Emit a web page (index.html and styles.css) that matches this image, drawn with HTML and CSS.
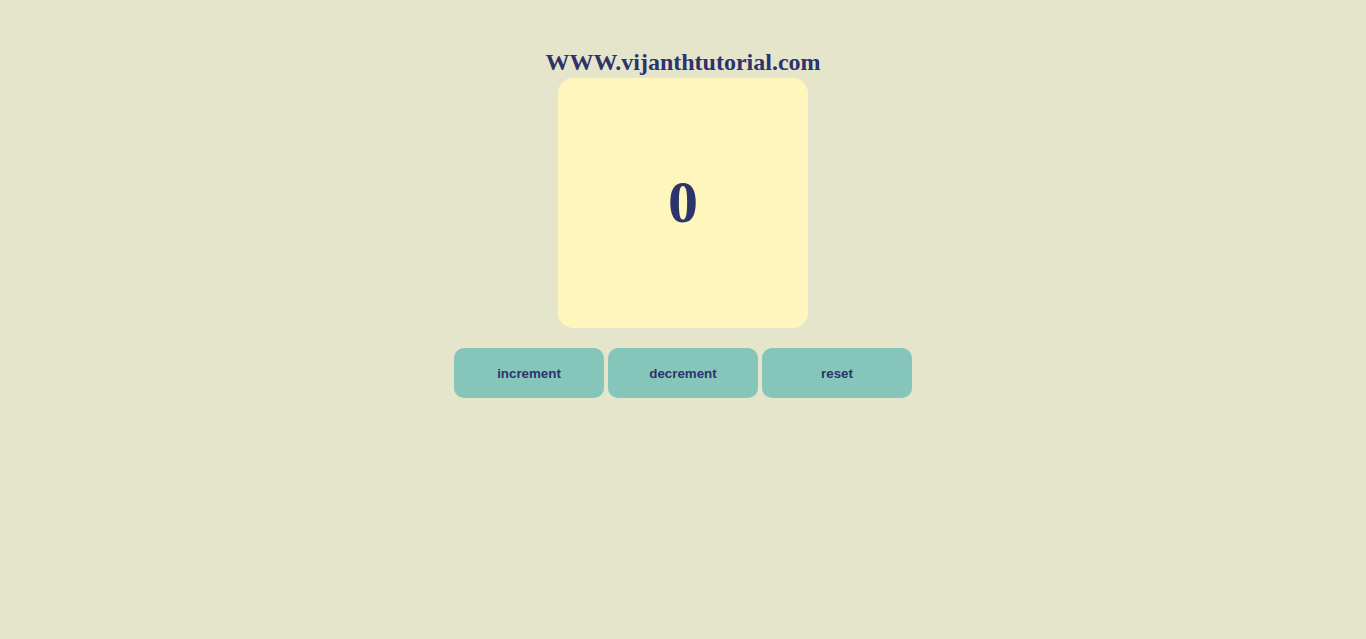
FILE: index.html
```html
<!DOCTYPE html>
<html>
<head>
<meta charset="utf-8">
<link rel="stylesheet" href="styles.css">
</head>
<body>
<div class="app">
  <h1 class="title">WWW.vijanthtutorial.com</h1>
  <div class="card"><span class="count">0</span></div>
  <div class="buttons">
    <button class="btn">increment</button>
    <button class="btn">decrement</button>
    <button class="btn">reset</button>
  </div>
</div>
</body>
</html>
```
FILE: styles.css
```css
html, body {
  margin: 0;
  padding: 0;
  background: #e5e5cb;
}
body {
  font-family: "Liberation Serif", "Times New Roman", serif;
  color: #2d336b;
}
.app {
  display: flex;
  flex-direction: column;
  align-items: center;
  padding-top: 48px;
}
.title {
  margin: 0;
  font-size: 24px;
  line-height: 28px;
  font-weight: bold;
  color: #2d336b;
}
.card {
  margin-top: 2px;
  width: 250px;
  height: 250px;
  background: #fff6be;
  border-radius: 15px;
  display: flex;
  align-items: center;
  justify-content: center;
}
.count {
  font-size: 60px;
  line-height: 68px;
  font-weight: bold;
  color: #2d336b;
  margin-top: -2px;
}
.buttons {
  margin-top: 20px;
  display: flex;
  gap: 4px;
}
.btn {
  width: 150px;
  height: 50px;
  border: none;
  border-radius: 10px;
  background: #86c6ba;
  color: #2d336b;
  font-family: "Liberation Sans", Arial, sans-serif;
  font-size: 13.333px;
  font-weight: bold;
  padding: 0;
}
```
